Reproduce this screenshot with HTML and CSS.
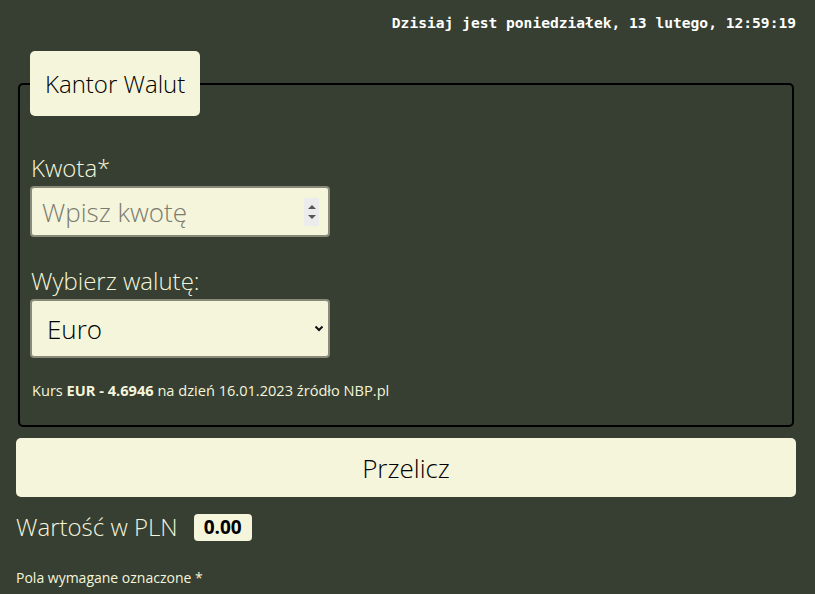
FILE: index.html
```html
<!DOCTYPE html>
<html lang="pl">
<head>
<meta charset="utf-8">
<title>Kantor Walut</title>
<link rel="stylesheet" href="styles.css">
</head>
<body>
<div class="clock">Dzisiaj jest poniedziałek, 13 lutego, 12:59:19</div>
<form class="form">
  <fieldset class="box">
    <legend class="legend">Kantor Walut</legend>
    <label class="label" for="kwota">Kwota*</label>
    <div class="field">
      <span class="input">Wpisz kwotę</span>
      <span class="spin">
        <svg width="8" height="6" viewBox="0 0 8 6"><path d="M0 5 L4 1 L8 5 Z" fill="#555"/></svg>
        <svg width="8" height="6" viewBox="0 0 8 6"><path d="M0 1 L4 5 L8 1 Z" fill="#555"/></svg>
      </span>
    </div>
    <label class="label label-2" for="waluta">Wybierz walutę:</label>
    <div class="field select">
      <span class="value">Euro</span>
      <svg width="10" height="7" viewBox="0 0 10 7"><path d="M1.5 1.5 L5 5 L8.5 1.5" fill="none" stroke="#111" stroke-width="2"/></svg>
    </div>
    <p class="rate">Kurs <b>EUR - 4.6946</b> na dzień 16.01.2023 źródło NBP.pl</p>
  </fieldset>
  <div class="button">Przelicz</div>
  <div class="result">
    <span class="result-label">Wartość w PLN</span>
    <span class="badge">0.00</span>
  </div>
  <p class="note">Pola wymagane oznaczone *</p>
</form>
</body>
</html>
```
FILE: styles.css
```css
html, body {
  margin: 0;
  height: 100%;
}
body {
  background: #363f31;
  font-family: "Open Sans", sans-serif;
  color: #f5f5dc;
  padding: 0 19px 0 16px;
  box-sizing: border-box;
  overflow: hidden;
}
.clock {
  font-family: "DejaVu Sans Mono", monospace;
  font-weight: bold;
  font-size: 14.6px;
  color: #fff;
  text-align: right;
  padding-top: 13px;
  line-height: 19px;
}
.form {
  margin-top: 19px;
}
.box {
  margin: 0 2px;
  border: 2px solid #000;
  border-radius: 5px;
  padding: 36px 10px 25px 10px;
  display: flex;
  flex-direction: column;
  align-items: flex-start;
}
.legend {
  background: #f5f5dc;
  color: #000;
  font-weight: 300;
  font-size: 24px;
  line-height: 31px;
  padding: 17px 15px;
  border-radius: 5px;
}
.label {
  font-weight: 300;
  font-size: 24px;
  line-height: 32px;
  margin-left: 1px;
  margin-bottom: 2px;
}
.label-2 {
  margin-top: 28px;
}
.field {
  width: 300px;
  height: 51px;
  box-sizing: border-box;
  background: #f5f5dc;
  border: 2px solid #8a8a7a;
  border-radius: 4px;
  display: flex;
  align-items: center;
  justify-content: space-between;
  padding: 0 9px 0 10px;
  font-size: 26px;
  font-weight: 300;
}
.input {
  color: #7b7b70;
}
.spin {
  display: flex;
  flex-direction: column;
  align-items: center;
  justify-content: center;
  gap: 4px;
  background: #ececec;
  width: 15px;
  height: 28px;
}
.select {
  height: 59px;
  padding: 0 4px 0 15px;
  color: #000;
}
.rate {
  font-size: 14.6px;
  margin: 22px 0 0 2px;
  line-height: 20px;
}
.rate b {
  font-weight: 700;
}
.button {
  margin-top: 11px;
  height: 59px;
  background: #f5f5dc;
  border-radius: 5px;
  color: #000;
  display: flex;
  align-items: center;
  justify-content: center;
  font-weight: 300;
  font-size: 26px;
}
.result {
  display: flex;
  align-items: center;
  gap: 16px;
  margin-top: 14px;
}
.result-label {
  font-weight: 300;
  font-size: 24px;
  line-height: 32px;
}
.badge {
  background: #f5f5dc;
  color: #000;
  font-weight: 700;
  font-size: 19px;
  line-height: 27px;
  padding: 0 10px;
  border-radius: 4px;
}
.note {
  font-size: 14px;
  line-height: 20px;
  margin: 25px 0 0;
}
```
